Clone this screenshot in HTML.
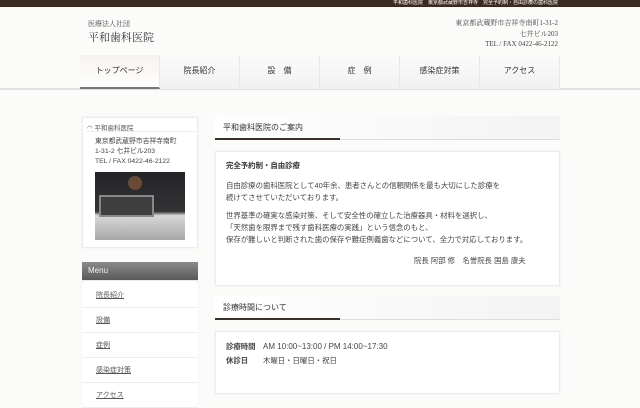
<!DOCTYPE html>
<html><head><meta charset="utf-8"><style>
*{margin:0;padding:0;box-sizing:border-box}
body{width:640px;height:400px;overflow:hidden;background:#fbfbfa;font-family:"Liberation Sans","Noto Sans CJK JP",sans-serif;color:#333;position:relative}
.a{position:absolute}
.top{left:0;top:0;width:640px;height:7px;background:#3b2a1f;color:#fff;font-size:5px;line-height:7px;text-align:right;padding-right:82px}
.serif{font-family:"Liberation Serif","Noto Serif CJK SC",serif}
.nav{left:80px;top:55px;width:480px;height:34px;display:flex}
.nav div{width:80px;height:34px;line-height:32px;text-align:center;font-size:8px;color:#333;background:linear-gradient(#fbfbfb,#f1f1f1);border-right:1px solid #e8e8e8}
.nav div.on{background:linear-gradient(#f6f2ee,#fff);border-bottom:2px solid #777}
.line{left:0;top:88px;width:640px;height:2px;background:#e0e0e0}
.box{background:#fff;border:1px solid #ececec;box-shadow:0 0 2px rgba(0,0,0,.06)}
.h{left:215px;width:345px;height:24px;background:linear-gradient(90deg,#fff,#f3f3f3);font-size:8px;line-height:24px;padding-left:8px;color:#333;border-bottom:1px solid #ddd}
.h:after{content:"";position:absolute;left:0;bottom:-1px;width:125px;height:2px;background:#3a3028}
.t{font-size:7.4px;line-height:12px;color:#444;white-space:nowrap}
.mi{left:82px;width:116px;height:25px;background:#fff;border-bottom:1px solid #eee;font-size:7px;line-height:25px;padding-left:14px;color:#555;text-decoration:underline}
</style></head><body>
<div class="a top">平和歯科医院　東京都武蔵野市吉祥寺　完全予約制・自由診療の歯科医院</div>
<div class="a serif" style="left:88px;top:19px;font-size:7px;color:#444">医療法人社団</div>
<div class="a serif" style="left:88px;top:29px;font-size:11px;color:#333">平和歯科医院</div>
<div class="a serif" style="right:82px;top:18px;font-size:7px;line-height:10.5px;text-align:right;color:#444">東京都武蔵野市吉祥寺南町1-31-2<br>七井ビル203<br>TEL / FAX 0422-46-2122</div>
<div class="a line"></div>
<div class="a nav"><div class="on">トップページ</div><div>院長紹介</div><div>設　備</div><div>症　例</div><div>感染症対策</div><div>アクセス</div></div>

<div class="a box" style="left:82px;top:117px;width:116px;height:131px"></div>
<div class="a" style="left:87px;top:122px;font-size:6.5px;color:#555">◠ 平和歯科医院</div>
<div class="a" style="left:86px;top:131px;width:110px;height:1px;background:#eee"></div>
<div class="a" style="left:95px;top:137px;font-size:6.8px;line-height:10px;color:#444">東京都武蔵野市吉祥寺南町<br>1-31-2 七井ビル203<br>TEL / FAX 0422-46-2122</div>
<div class="a" style="left:95px;top:172px;width:90px;height:68px;background:linear-gradient(180deg,#242428 0,#333336 58%,#d8d8d8 64%,#a8a8a8 100%)"></div>
<div class="a" style="left:128px;top:176px;width:14px;height:14px;border-radius:50%;background:#6a4a34"></div>
<div class="a" style="left:99px;top:195px;width:55px;height:22px;background:#3e3e3e;border:2px solid #888"></div>
<div class="a" style="left:82px;top:262px;width:116px;height:18px;background:linear-gradient(#8a8a8a,#5a5a5a);color:#eee;font-size:8px;line-height:18px;padding-left:6px">Menu</div>
<div class="a box" style="left:82px;top:280px;width:116px;height:120px"></div>
<div class="a mi" style="top:283px">院長紹介</div>
<div class="a mi" style="top:308px">設備</div>
<div class="a mi" style="top:333px">症例</div>
<div class="a mi" style="top:358px">感染症対策</div>
<div class="a mi" style="top:383px">アクセス</div>

<div class="a h" style="top:116px">平和歯科医院のご案内</div>
<div class="a box" style="left:215px;top:151px;width:345px;height:135px"></div>
<div class="a t" style="left:226px;top:160px;font-weight:bold;color:#333">完全予約制・自由診療</div>
<div class="a t" style="left:226px;top:180px">自由診療の歯科医院として40年余、患者さんとの信頼関係を最も大切にした診療を<br>続けてさせていただいております。</div>
<div class="a t" style="left:226px;top:210px">世界基準の確実な感染対策、そして安全性の確立した治療器具・材料を選択し、<br>「天然歯を限界まで残す歯科医療の実践」という信念のもと、<br>保存が難しいと判断された歯の保存や難症例義歯などについて、全力で対応しております。</div>
<div class="a t" style="left:414px;top:255px">院長 阿部 修　名誉院長 国島 康夫</div>

<div class="a h" style="top:296px">診療時間について</div>
<div class="a box" style="left:215px;top:331px;width:345px;height:63px"></div>
<div class="a t" style="left:226px;top:341px"><b>診療時間</b>　<span style="font-size:8px">AM 10:00~13:00 / PM 14:00~17:30</span></div>
<div class="a t" style="left:226px;top:355px"><b>休診日</b>　　木曜日・日曜日・祝日</div>
</body></html>
